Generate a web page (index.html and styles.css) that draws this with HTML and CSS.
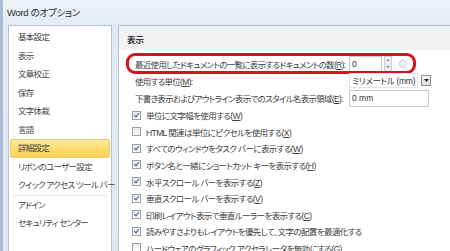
FILE: index.html
```html
<!DOCTYPE html>
<html lang="ja">
<head>
<meta charset="utf-8">
<link rel="stylesheet" href="styles.css">
</head>
<body>
<div class="window">
  <div class="titlebar">Word のオプション</div>
  <div class="main">
    <ul class="sidebar">
      <li class="item">基本設定</li>
      <li class="item">表示</li>
      <li class="item">文章校正</li>
      <li class="item">保存</li>
      <li class="item">文字体裁</li>
      <li class="item">言語</li>
      <li class="item active">詳細設定</li>
      <li class="item">リボンのユーザー設定</li>
      <li class="item">クイック アクセス ツール バー</li>
      <li class="sep"></li>
      <li class="item">アドイン</li>
      <li class="item">セキュリティ センター</li>
    </ul>
    <div class="panel">
      <div class="panel-header">表示</div>
      <div class="form">
        <div class="frow">
          <span class="label">最近使用したドキュメントの一覧に表示するドキュメントの数(<u>R</u>):</span>
          <span class="ctrl">
            <span class="box spin-box">0</span>
            <span class="spinner"><span class="up"></span><span class="down"></span></span>
            <span class="info">i</span>
          </span>
          <span class="annot"></span>
        </div>
        <div class="frow">
          <span class="label">使用する単位(<u>M</u>):</span>
          <span class="ctrl">
            <span class="select">ミリメートル (mm)</span>
            <span class="drop"><svg width="5" height="3" viewBox="0 0 5 3"><path d="M0 0h5L2.5 3z" fill="#222"/></svg></span>
          </span>
        </div>
        <div class="frow">
          <span class="label">下書き表示およびアウトライン表示でのスタイル名表示領域(<u>E</u>):</span>
          <span class="ctrl"><span class="box wide-box">0 mm</span></span>
        </div>
      </div>
      <ul class="checks">
        <li class="crow"><span class="cb on"></span><span class="ctext">単位に文字幅を使用する(<u>W</u>)</span></li>
        <li class="crow"><span class="cb"></span><span class="ctext">HTML 関連は単位にピクセルを使用する(<u>X</u>)</span></li>
        <li class="crow"><span class="cb on"></span><span class="ctext">すべてのウィンドウをタスク バーに表示する(<u>W</u>)</span></li>
        <li class="crow"><span class="cb on"></span><span class="ctext">ボタン名と一緒にショートカット キーを表示する(<u>H</u>)</span></li>
        <li class="crow"><span class="cb on"></span><span class="ctext">水平スクロール バーを表示する(<u>Z</u>)</span></li>
        <li class="crow"><span class="cb on"></span><span class="ctext">垂直スクロール バーを表示する(<u>V</u>)</span></li>
        <li class="crow"><span class="cb on"></span><span class="ctext">印刷レイアウト表示で垂直ルーラーを表示する(<u>C</u>)</span></li>
        <li class="crow"><span class="cb on"></span><span class="ctext">読みやすさよりもレイアウトを優先して、文字の配置を最適化する</span></li>
        <li class="crow"><span class="cb"></span><span class="ctext">ハードウェアのグラフィック アクセラレータを無効にする(<u>G</u>)</span></li>
      </ul>
    </div>
  </div>
</div>
</body>
</html>
```

FILE: styles.css
```css
* { box-sizing: border-box; }
html, body { margin: 0; padding: 0; }
body {
  width: 450px;
  height: 251px;
  overflow: hidden;
  font-family: "Liberation Sans", "Noto Sans CJK JP", sans-serif;
  font-size: 8.5px;
  letter-spacing: -0.7px;
  font-feature-settings: "palt";
  color: #3e3e3e;
  background: #e4ebf4;
}
.window {
  height: 251px;
  border-left: 3px solid #a9bcd6;
  background: linear-gradient(#eef2f8, #e2e9f2 30px, #e1e8f1);
  display: flex;
  flex-direction: column;
}
.titlebar {
  height: 25px;
  line-height: 25px;
  padding-left: 4px;
  font-size: 9.5px;
  letter-spacing: -0.3px;
  color: #2b2b2b;
}
.main {
  flex: 1;
  display: flex;
  gap: 6px;
  padding-left: 5px;
  min-height: 0;
}
ul { list-style: none; margin: 0; padding: 0; }
.sidebar {
  width: 104px;
  background: #fff;
  border: 1px solid #b8c2cf;
  border-bottom: none;
  padding: 2px 1px 0;
}
.item {
  height: 18.5px;
  line-height: 18.5px;
  padding-left: 8px;
  white-space: nowrap;
  color: #444;
}
.item.active {
  background: linear-gradient(#fde9a2, #fcd968 60%, #fbd45a);
  border: 1px solid #ecc868;
  border-radius: 2px;
  line-height: 16.5px;
  padding-left: 7px;
}
.sep {
  height: 1px;
  margin: 0 3px;
  background: #e3e5e8;
}
.panel {
  flex: 1;
  background: #fff;
  border: 1px solid #b8c2cf;
  border-right: none;
  border-bottom: none;
}
.panel-header {
  height: 24px;
  padding: 7px 0 0 8px;
  line-height: 14px;
  background: #f0f1f3;
  font-weight: 700;
  letter-spacing: 0;
  color: #333;
}
.form { padding: 5px 0 0 16px; }
.frow {
  position: relative;
  display: grid;
  grid-template-columns: 214px auto;
  align-items: center;
  height: 17.3px;
  white-space: nowrap;
}
.ctrl { display: flex; align-items: center; gap: 2px; letter-spacing: 0; }
.box {
  display: block;
  height: 16px;
  line-height: 14px;
  padding-left: 2px;
  border: 1px solid #c3c8d0;
  background: #fff;
  color: #333;
}
.spin-box { width: 33px; }
.wide-box { width: 80px; height: 17px; line-height: 15px; }
.spinner {
  display: flex;
  flex-direction: column;
  width: 8px;
  height: 16px;
  border: 1px solid #c9ced6;
  background: linear-gradient(#f4f5f7, #e3e6ea);
}
.spinner .up, .spinner .down { flex: 1; position: relative; }
.spinner .up::after, .spinner .down::after {
  content: "";
  position: absolute;
  left: 1px;
  border-left: 2px solid transparent;
  border-right: 2px solid transparent;
}
.spinner .up::after { top: 2px; border-bottom: 2px solid #8a8f97; }
.spinner .down::after { top: 2px; border-top: 2px solid #8a8f97; }
.info {
  margin-left: 5px;
  width: 8px;
  height: 8px;
  border-radius: 50%;
  border: 1px solid #b8c8dc;
  color: #9db3cf;
  font-size: 6px;
  line-height: 6px;
  text-align: center;
  font-family: "DejaVu Serif", serif;
}
.annot {
  position: absolute;
  left: -9px;
  top: -2px;
  width: 290px;
  height: 21px;
  border: 3px solid #d3141f;
  border-radius: 9px;
}
.select {
  width: 69px;
  height: 15px;
  line-height: 14px;
  padding-left: 2px;
  border: 1px solid #e1e3e6;
  color: #333;
  letter-spacing: -0.3px;
  overflow: hidden;
}
.drop {
  width: 10px;
  height: 11px;
  border: 1px solid #8e939a;
  background: linear-gradient(#f6f6f6, #dadcdf);
  display: flex;
  align-items: center;
  justify-content: center;
  margin-left: 1px;
}
.drop svg { display: block; }
.checks { padding: 0 0 0 13px; }
.crow {
  height: 16.6px;
  display: flex;
  align-items: center;
  gap: 5px;
  white-space: nowrap;
}
.ctext { letter-spacing: -0.6px; }
.cb {
  flex: none;
  width: 9px;
  height: 9px;
  border: 1px solid #9aa0a8;
  background: linear-gradient(#e9ebee, #fafafa);
  position: relative;
}
.cb.on::after {
  content: "";
  position: absolute;
  left: 2px;
  top: 0px;
  width: 2px;
  height: 4px;
  border-right: 1.5px solid #3b5a85;
  border-bottom: 1.5px solid #3b5a85;
  transform: rotate(40deg);
}
u { text-decoration: underline; text-underline-offset: 1px; }
```
